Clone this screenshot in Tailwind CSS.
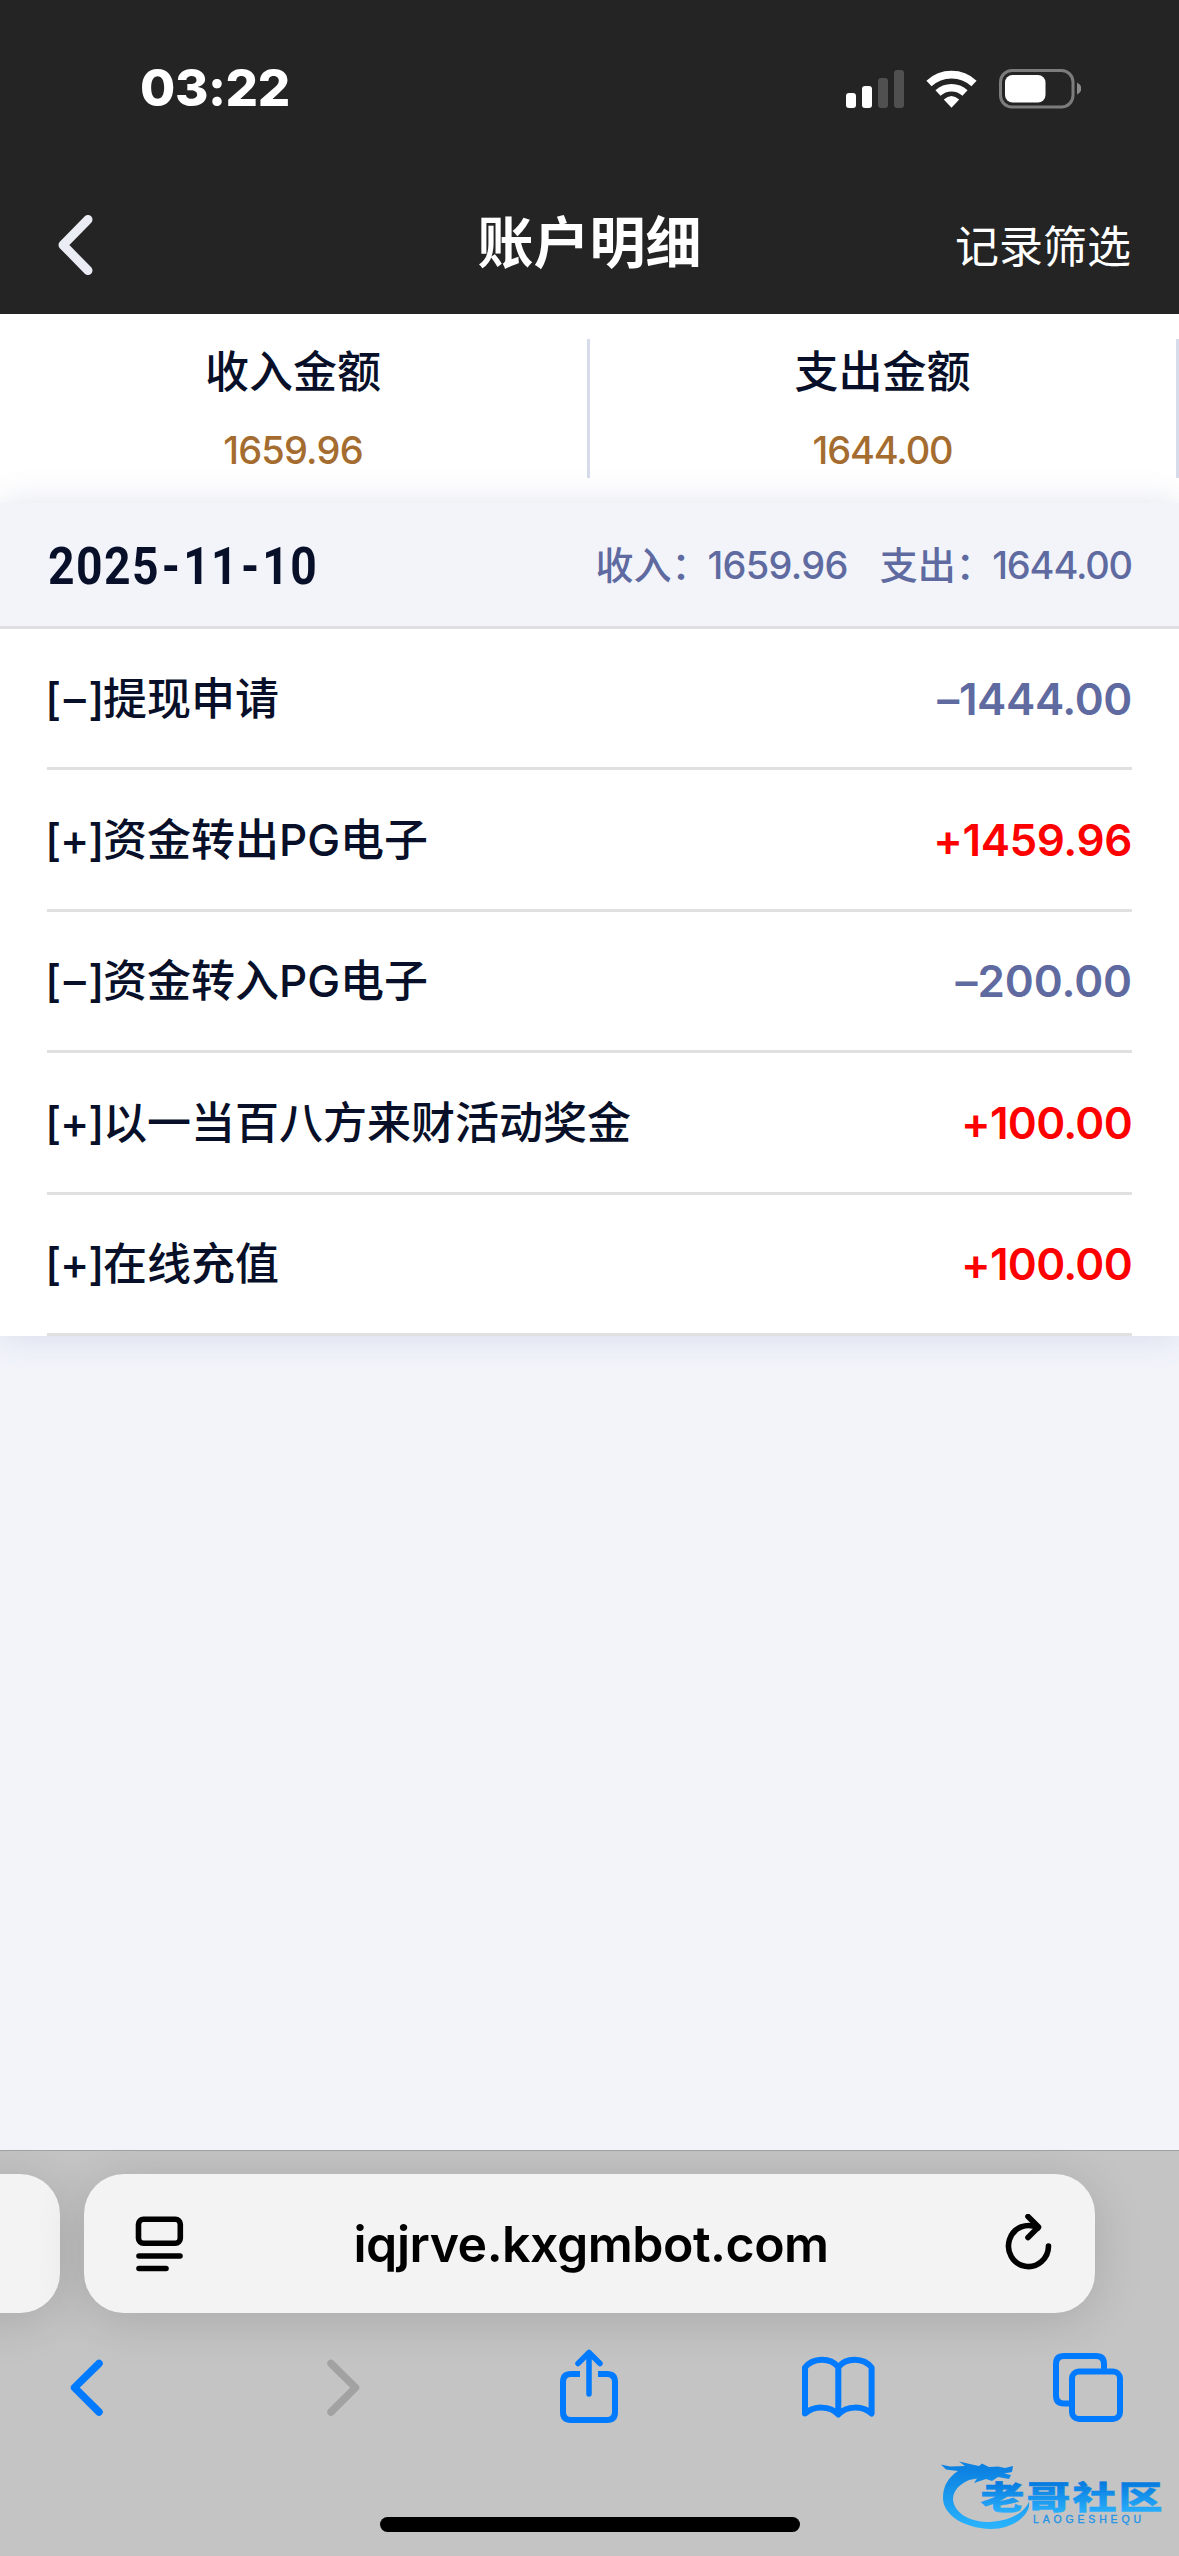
<!DOCTYPE html>
<html lang="zh-CN">
<head>
<meta charset="utf-8">
<title>账户明细</title>
<script src="https://cdn.jsdelivr.net/npm/@tailwindcss/browser@4"></script>
</head>
<body class="w-[1179px] h-[2556px] overflow-hidden bg-[#f2f4fa] font-['Inter','Noto_Sans_CJK_SC',sans-serif] text-[#080f29]">
<div class="flex h-[2556px] w-[1179px] flex-col">

  <!-- status bar + title bar -->
  <header class="h-[314px] shrink-0 bg-[#242424] text-white">
    <div class="flex h-[177px] items-center justify-between pl-[140px] pr-[98px]">
      <div class="-mt-[2px] text-[51px] leading-none font-extrabold tracking-[-0.4px]">03:22</div>
      <svg class="h-[40px] w-[236px]" viewBox="845 68 236 40" fill="#fff">
        <rect x="846" y="92" width="10" height="15" rx="3"/>
        <rect x="862" y="85" width="10" height="22" rx="3"/>
        <rect x="878" y="77" width="10" height="30" rx="3" fill="#505050"/>
        <rect x="894" y="69" width="10" height="38" rx="3" fill="#505050"/>
        <g fill="none" stroke="#fff" stroke-width="7.6">
          <path d="M929 82.500 A 33 33 0 0 1 974 82.500"/>
          <path d="M938 92 A 20 20 0 0 1 965 92"/>
        </g>
        <path d="M943.800 98.500 Q951.500 91.500 959.200 98.500 L951.500 106.800Z"/>
        <rect x="1000.500" y="69.500" width="72.500" height="36.500" rx="11.500" fill="none" stroke="#7c7c7c" stroke-width="3"/>
        <rect x="1005" y="74" width="40.500" height="27.500" rx="7.500"/>
        <path d="M1077 81.500 Q1081.500 84 1081.500 87.500 Q1081.500 91 1077 93.500Z" fill="#8a8a8a"/>
      </svg>
    </div>
    <div class="grid h-[137px] grid-cols-3 items-center pl-[57px] pr-[48px]">
      <svg class="-mt-[2px] h-[62px] w-[38px]" viewBox="0 0 38 62" fill="none" stroke="#ebedf5" stroke-width="9" stroke-linecap="round" stroke-linejoin="round"><path d="M31 5.500 L6 31 L31 56.500"/></svg>
      <h1 class="-mt-[6px] pr-[9px] text-center text-[56px] leading-[64px] font-bold whitespace-nowrap">账户明细</h1>
      <div class="pt-[2px] text-right text-[44px] leading-[56px] font-normal">记录筛选</div>
    </div>
  </header>

  <!-- totals -->
  <section class="flex h-[189px] shrink-0 items-start bg-white pt-[25px]">
    <div class="flex h-[139px] w-[590px] flex-col items-center border-r-[3px] border-[#d6dcea] pr-[1px] text-center">
      <div class="mt-[2px] text-[44px] leading-[62px] font-medium">收入金额</div>
      <div class="mt-[24px] text-[38px] leading-[46px] font-[450] tracking-[-0.8px] text-[#a56c30]">1659.96</div>
    </div>
    <div class="flex h-[139px] w-[589px] flex-col items-center border-r-[3px] border-[#d6dcea] pr-[1px] text-center">
      <div class="mt-[2px] text-[44px] leading-[62px] font-medium">支出金额</div>
      <div class="mt-[24px] text-[38px] leading-[46px] font-[450] tracking-[-1.15px] text-[#a56c30]">1644.00</div>
    </div>
  </section>

  <!-- day group -->
  <section class="h-[833px] shrink-0 bg-white shadow-[0_0_32px_rgba(90,100,160,0.18)]">
    <div class="flex h-[126px] items-center justify-between border-b-[3px] border-[#dfdfe1] bg-[#f2f4fa] pr-[47px] pl-[48px]">
      <div class="mt-[4px] flex origin-left scale-x-[0.89] items-center font-['Roboto'] text-[52px] leading-none font-bold tracking-[1.6px]"><span>2025</span><span class="px-[2px]">-</span><span>11</span><span class="px-[2px]">-</span><span>10</span></div>
      <div class="flex items-center text-[38px] leading-[50px] font-[450] text-[#5f6ba0]">
        <span class="-mr-[2px]">收入：</span><span class="tracking-[-0.7px]">1659.96</span>
        <span class="-mr-[1.5px] ml-[32px]">支出：</span><span class="tracking-[-1.15px]">1644.00</span>
      </div>
    </div>
    <ul class="px-[47px] text-[44px] leading-[56px]">
      <li class="flex h-[141.4px] items-center justify-between border-b-[3px] border-[#e0e0e0] pt-[1px]"><span class="flex font-medium"><span class="-mr-[1.5px] -ml-[2px] flex w-[59.5px] justify-between"><span>[</span><span class="-mx-[6px]">–</span><span>]</span></span>提现申请</span><span class="font-semibold tracking-[-0.4px] text-[#5f6ba0]">–1444.00</span></li>
      <li class="flex h-[141.4px] items-center justify-between border-b-[3px] border-[#e0e0e0] pt-[1px]"><span class="flex font-medium"><span class="-mr-[1.5px] -ml-[2px] flex w-[59.5px] justify-between"><span>[</span><span class="-mx-[6px]">+</span><span>]</span></span>资金转出PG电子</span><span class="font-semibold tracking-[-0.4px] text-[#ff0000]">+1459.96</span></li>
      <li class="flex h-[141.4px] items-center justify-between border-b-[3px] border-[#e0e0e0] pt-[1px]"><span class="flex font-medium"><span class="-mr-[1.5px] -ml-[2px] flex w-[59.5px] justify-between"><span>[</span><span class="-mx-[6px]">–</span><span>]</span></span>资金转入PG电子</span><span class="font-semibold tracking-[-0.1px] text-[#5f6ba0]">–200.00</span></li>
      <li class="flex h-[141.4px] items-center justify-between border-b-[3px] border-[#e0e0e0] pt-[1px]"><span class="flex font-medium"><span class="-mr-[1.5px] -ml-[2px] flex w-[59.5px] justify-between"><span>[</span><span class="-mx-[6px]">+</span><span>]</span></span>以一当百八方来财活动奖金</span><span class="font-semibold tracking-[-0.7px] text-[#ff0000]">+100.00</span></li>
      <li class="flex h-[141.4px] items-center justify-between border-b-[3px] border-[#e0e0e0] pt-[1px]"><span class="flex font-medium"><span class="-mr-[1.5px] -ml-[2px] flex w-[59.5px] justify-between"><span>[</span><span class="-mx-[6px]">+</span><span>]</span></span>在线充值</span><span class="font-semibold tracking-[-0.7px] text-[#ff0000]">+100.00</span></li>
    </ul>
  </section>

  <div class="grow"></div>

  <!-- browser toolbar -->
  <footer class="relative h-[406px] shrink-0 overflow-hidden border-t border-[#9fa1a5] bg-[#c4c4c4]">
    <div class="mt-[23px] flex h-[139px] gap-[24px]">
      <div class="-ml-[60px] w-[120px] shrink-0 rounded-[40px] bg-[#f3f3f3] shadow-[0_6px_50px_rgba(0,0,0,0.14)]"></div>
      <div class="flex w-[1011px] shrink-0 items-center justify-between rounded-[40px] bg-[#f3f3f3] pr-[41px] pl-[50px] text-black shadow-[0_6px_50px_rgba(0,0,0,0.14)]">
        <svg class="h-[60px] w-[52px]" viewBox="134 2214 52 60" fill="none" stroke="#000" stroke-width="5.600" stroke-linecap="round"><rect x="138.500" y="2219.300" width="41.800" height="24" rx="5"/><path d="M139 2256 H180 M139 2268.500 H166"/></svg>
        <div class="mr-[8px] text-[50px] leading-[64px] font-[560] tracking-[-0.5px]">iqjrve.kxgmbot.com</div>
        <svg class="h-[60px] w-[50px]" viewBox="1005 2213.500 50 60" fill="none" stroke="#000" stroke-width="5.600" stroke-linecap="round" stroke-linejoin="round"><path d="M1049.500 2245.500 A 20 20.500 0 1 1 1039 2227.500"/><path d="M1029 2216 L1039.500 2226.500 L1029 2237"/></svg>
      </div>
    </div>
    <div class="mt-[30px] flex h-[86px] items-center pl-[67px] text-[#007aff]">
      <svg class="h-[86px] w-[40px]" viewBox="67 2343 40 86" fill="none" stroke="currentColor" stroke-width="7.500" stroke-linecap="round" stroke-linejoin="round"><path d="M99 2363.500 L74.500 2387.700 L99 2412"/></svg>
      <svg class="ml-[217px] h-[86px] w-[40px]" viewBox="324 2343 40 86" fill="none" stroke="#a2a2a2" stroke-width="7.500" stroke-linecap="round" stroke-linejoin="round"><path d="M331 2363.500 L355.500 2387.700 L331 2412"/></svg>
      <svg class="ml-[193px] h-[86px] w-[64px]" viewBox="557 2343 64 86" fill="none" stroke="currentColor" stroke-width="6"><path d="M580 2374 H571 Q563 2374 563 2382 V2412 Q563 2420 571 2420 H607 Q615 2420 615 2412 V2382 Q615 2374 607 2374 H598"/><path d="M589 2394 V2353 M578 2363.500 L589 2352.500 L600 2363.500" stroke-width="5.500" stroke-linecap="round" stroke-linejoin="round"/></svg>
      <svg class="ml-[178px] h-[86px] w-[78px]" viewBox="799 2343 78 86" fill="none" stroke="currentColor" stroke-width="6" stroke-linejoin="round" stroke-linecap="round"><path d="M838.300 2367 C830 2357 813 2357.500 805 2367.500 V2413.500 C814 2405.500 830 2405.500 838.300 2414.500 C846.600 2405.500 862.600 2405.500 871.600 2413.500 V2367.500 C863.600 2357.500 846.600 2357 838.300 2367 V2414"/></svg>
      <svg class="ml-[173px] h-[86px] w-[76px]" viewBox="1050 2343 76 86" fill="none" stroke="currentColor" stroke-width="6"><rect x="1072" y="2371.500" width="48" height="47.500" rx="7"/><path d="M1070 2403.500 H1064 Q1056 2403.500 1056 2395.500 V2364 Q1056 2356 1064 2356 H1096 Q1104 2356 1104 2364 V2369"/></svg>
    </div>
    <div class="mx-auto mt-[88px] h-[15px] w-[420px] rounded-full bg-black"></div>

    <!-- community watermark -->
    <svg class="absolute top-[299px] left-[930px] h-[90px] w-[245px]" viewBox="930 2450 245 90">
      <defs><linearGradient id="wm" gradientUnits="userSpaceOnUse" x1="0" y1="2470" x2="0" y2="2528"><stop offset="0" stop-color="#0c82e2"/><stop offset="1" stop-color="#29b4fd"/></linearGradient>
      <linearGradient id="wt" gradientUnits="userSpaceOnUse" x1="0" y1="2483" x2="0" y2="2512"><stop offset="0" stop-color="#067be0"/><stop offset="1" stop-color="#28aefa"/></linearGradient></defs>
      <path fill="url(#wm)" d="M941 2464.500 L950 2466.500 L965 2466 L959 2461.500 L972 2464.500 L979 2466 L982 2463.500 L989 2467 L998 2466.500 L1005 2468 L1013 2466 L1012 2472 L1004 2473.500 L1011 2475 L1009 2479 L998 2477 L992 2481 L986 2479 L974 2483 L977 2478.500 L969 2480 C956 2486 953 2493 953 2500 C955 2514 970 2522 990 2522 C1010 2521 1024 2513 1029 2502 C1031 2514 1014 2529 991 2529 C962 2528 943 2514 943 2498 C943 2485 949 2477 958 2471 L946 2469.500Z"/>
      <text x="980.500" y="2509" textLength="184" lengthAdjust="spacingAndGlyphs" letter-spacing="1.500" font-family="Noto Sans CJK SC" font-weight="900" font-size="32" fill="url(#wt)" stroke="url(#wt)" stroke-width=".5">老哥社区</text>
      <text x="1033" y="2522.500" textLength="108" font-family="Liberation Sans" font-size="10.500" fill="#2093e6" stroke="#2093e6" stroke-width=".3">LAOGESHEQU</text>
    </svg>
  </footer>
</div>
</body>
</html>
